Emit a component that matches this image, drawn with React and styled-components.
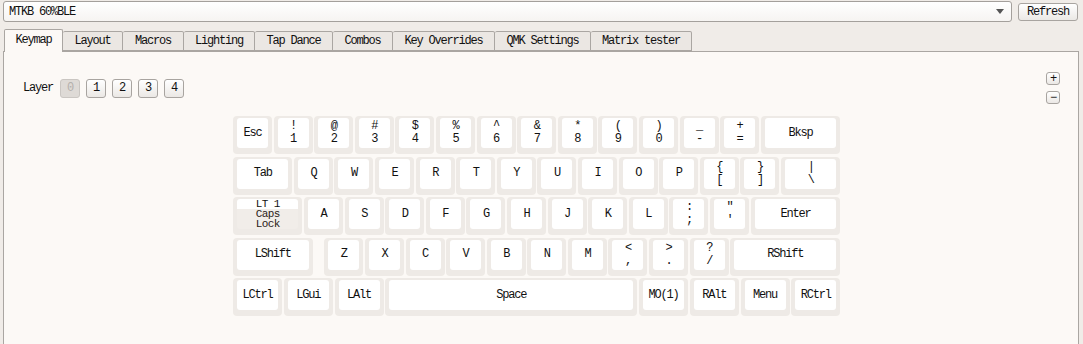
import React from "react";
import styled, { createGlobalStyle } from "styled-components";

const U = 40.6;

const GlobalStyle = createGlobalStyle`
  body {
    margin: 0;
    background: #f0ece8;
    font-family: "Liberation Mono", "DejaVu Sans Mono", monospace;
    font-size: 12px;
    letter-spacing: -1.2px;
    color: #111;
    overflow: hidden;
  }
`;

const Window = styled.div`
  width: 1083px;
  height: 344px;
  overflow: hidden;
`;

const TopBar = styled.div`
  display: flex;
  align-items: flex-start;
  gap: 6px;
  padding: 1px 5px 0 3px;
`;

const Combo = styled.div`
  flex: 1;
  height: 19px;
  display: flex;
  align-items: center;
  justify-content: space-between;
  padding: 0 7px 0 5px;
  border: 1px solid #a4a09c;
  border-radius: 3px;
  background: linear-gradient(#ffffff, #f6f4f2);
`;

const Arrow = styled.span`
  width: 0;
  height: 0;
  border-left: 4px solid transparent;
  border-right: 4px solid transparent;
  border-top: 5px solid #555;
`;

const Button = styled.button`
  font: inherit;
  letter-spacing: inherit;
  color: #111;
  height: ${(p) => p.$h || 18}px;
  width: ${(p) => p.$w}px;
  padding: 0;
  margin-top: ${(p) => p.$top || 0}px;
  border: 1px solid #a8a4a0;
  border-radius: 3px;
  background: linear-gradient(#ffffff, #ebe8e5);
  display: flex;
  align-items: center;
  justify-content: center;
  line-height: 1;

  &:disabled {
    background: #dedad6;
    border-color: #cac6c2;
    color: #b4b0ac;
  }
`;

const Tabs = styled.div`
  display: flex;
  align-items: flex-end;
  height: 22px;
  margin-top: 7px;
  padding-left: 4px;
  position: relative;
  z-index: 1;
`;

const Tab = styled.div`
  width: ${(p) => p.$w}px;
  height: ${(p) => (p.$active ? 23 : 20)}px;
  box-sizing: border-box;
  display: flex;
  align-items: center;
  justify-content: center;
  border: 1px solid #aaa6a2;
  border-left-width: ${(p) => (p.$first || p.$active ? 1 : 0)}px;
  border-bottom: ${(p) => (p.$active ? "none" : "1px solid #aaa6a2")};
  border-radius: 2px 2px 0 0;
  background: ${(p) => (p.$active ? "#fcf9f6" : "#ebe7e3")};
  margin-bottom: ${(p) => (p.$active ? -1 : 0)}px;
  padding-bottom: ${(p) => (p.$active ? 2 : 0)}px;
`;

const Panel = styled.div`
  margin: 0 4px 0 3px;
  height: 320px;
  border: 1px solid #aaa6a2;
  background: #fcf9f6;
`;

const PanelHead = styled.div`
  display: flex;
  align-items: center;
  justify-content: space-between;
  padding: 20px 18px 0 19px;
`;

const LayerGroup = styled.div`
  display: flex;
  align-items: center;
  gap: 6px;
`;

const LayerLabel = styled.span`
  margin-right: 1px;
`;

const ZoomCol = styled.div`
  display: flex;
  flex-direction: column;
  gap: 6px;
`;

const Keyboard = styled.div`
  margin: 12px 0 0 229px;
  display: flex;
  flex-direction: column;
  gap: 2.6px;
`;

const Row = styled.div`
  display: flex;
`;

const Slot = styled.div`
  width: ${(p) => p.$w * U}px;
  flex: none;
`;

const Frame = styled.div`
  width: calc(100% - 1.6px);
  height: 38px;
  box-sizing: border-box;
  padding: 2px 4px 6px;
  border-radius: 4px;
  background: #eeeae6;
`;

const Cap = styled.div`
  height: 100%;
  border-radius: 3px;
  background: #ffffff;
  display: flex;
  flex-direction: column;
  align-items: center;
  justify-content: center;
  line-height: 13px;
  white-space: pre;
`;

const SplitCap = styled.div`
  height: 100%;
  border-radius: 3px;
  overflow: hidden;
  display: flex;
  flex-direction: column;
  font-size: 11px;
  letter-spacing: -0.6px;
  line-height: 10px;
  text-align: center;
`;

const SplitTop = styled.div`
  height: 10px;
  background: #ffffff;
`;

const SplitBottom = styled.div`
  flex: 1;
  background: #f1ede9;
  color: #2a2218;
`;

const tabs = [
  ["Keymap", 59],
  ["Layout", 60],
  ["Macros", 61],
  ["Lighting", 71],
  ["Tap Dance", 78],
  ["Combos", 60],
  ["Key Overrides", 102],
  ["QMK Settings", 96],
  ["Matrix tester", 101],
];

const rows = [
  [
    ["Esc"], ["!\n1"], ["@\n2"], ["#\n3"], ["$\n4"], ["%\n5"], ["^\n6"],
    ["&\n7"], ["*\n8"], ["(\n9"], [")\n0"], ["_\n-"], ["+\n="], ["Bksp", 2],
  ],
  [
    ["Tab", 1.5], ["Q"], ["W"], ["E"], ["R"], ["T"], ["Y"], ["U"], ["I"],
    ["O"], ["P"], ["{\n["], ["}\n]"], ["|\n\\", 1.5],
  ],
  [
    ["caps", 1.75], ["A"], ["S"], ["D"], ["F"], ["G"], ["H"], ["J"], ["K"],
    ["L"], [":\n;"], ["\"\n'"], ["Enter", 2.25],
  ],
  [
    ["LShift", 2], [null, 0.25], ["Z"], ["X"], ["C"], ["V"], ["B"], ["N"],
    ["M"], ["<\n,"], [">\n."], ["?\n/"], ["RShift", 2.75],
  ],
  [
    ["LCtrl", 1.25], ["LGui", 1.25], ["LAlt", 1.25], ["Space", 6.25],
    ["MO(1)", 1.25], ["RAlt", 1.25], ["Menu", 1.25], ["RCtrl", 1.25],
  ],
];

const Key = ({ label, w = 1 }) => {
  if (label === null) return <Slot $w={w} />;
  return (
    <Slot $w={w}>
      <Frame>
        {label === "caps" ? (
          <SplitCap>
            <SplitTop>LT 1</SplitTop>
            <SplitBottom>
              <div>Caps</div>
              <div>Lock</div>
            </SplitBottom>
          </SplitCap>
        ) : (
          <Cap>{label}</Cap>
        )}
      </Frame>
    </Slot>
  );
};

export default function App() {
  return (
    <Window>
      <GlobalStyle />
      <TopBar>
        <Combo>
          <span>MTKB 60%BLE</span>
          <Arrow />
        </Combo>
        <Button $w={60} $top={2}>Refresh</Button>
      </TopBar>
      <Tabs>
        {tabs.map(([name, w], i) => (
          <Tab key={name} $w={w} $first={i === 0} $active={i === 0}>
            {name}
          </Tab>
        ))}
      </Tabs>
      <Panel>
        <PanelHead>
          <LayerGroup>
            <LayerLabel>Layer</LayerLabel>
            {[0, 1, 2, 3, 4].map((n) => (
              <Button key={n} $w={20} $h={19} disabled={n === 0}>
                {n}
              </Button>
            ))}
          </LayerGroup>
          <ZoomCol>
            <Button $w={14} $h={13}>+</Button>
            <Button $w={14} $h={13}>−</Button>
          </ZoomCol>
        </PanelHead>
        <Keyboard>
          {rows.map((row, r) => (
            <Row key={r}>
              {row.map(([label, w], i) => (
                <Key key={i} label={label} w={w} />
              ))}
            </Row>
          ))}
        </Keyboard>
      </Panel>
    </Window>
  );
}
